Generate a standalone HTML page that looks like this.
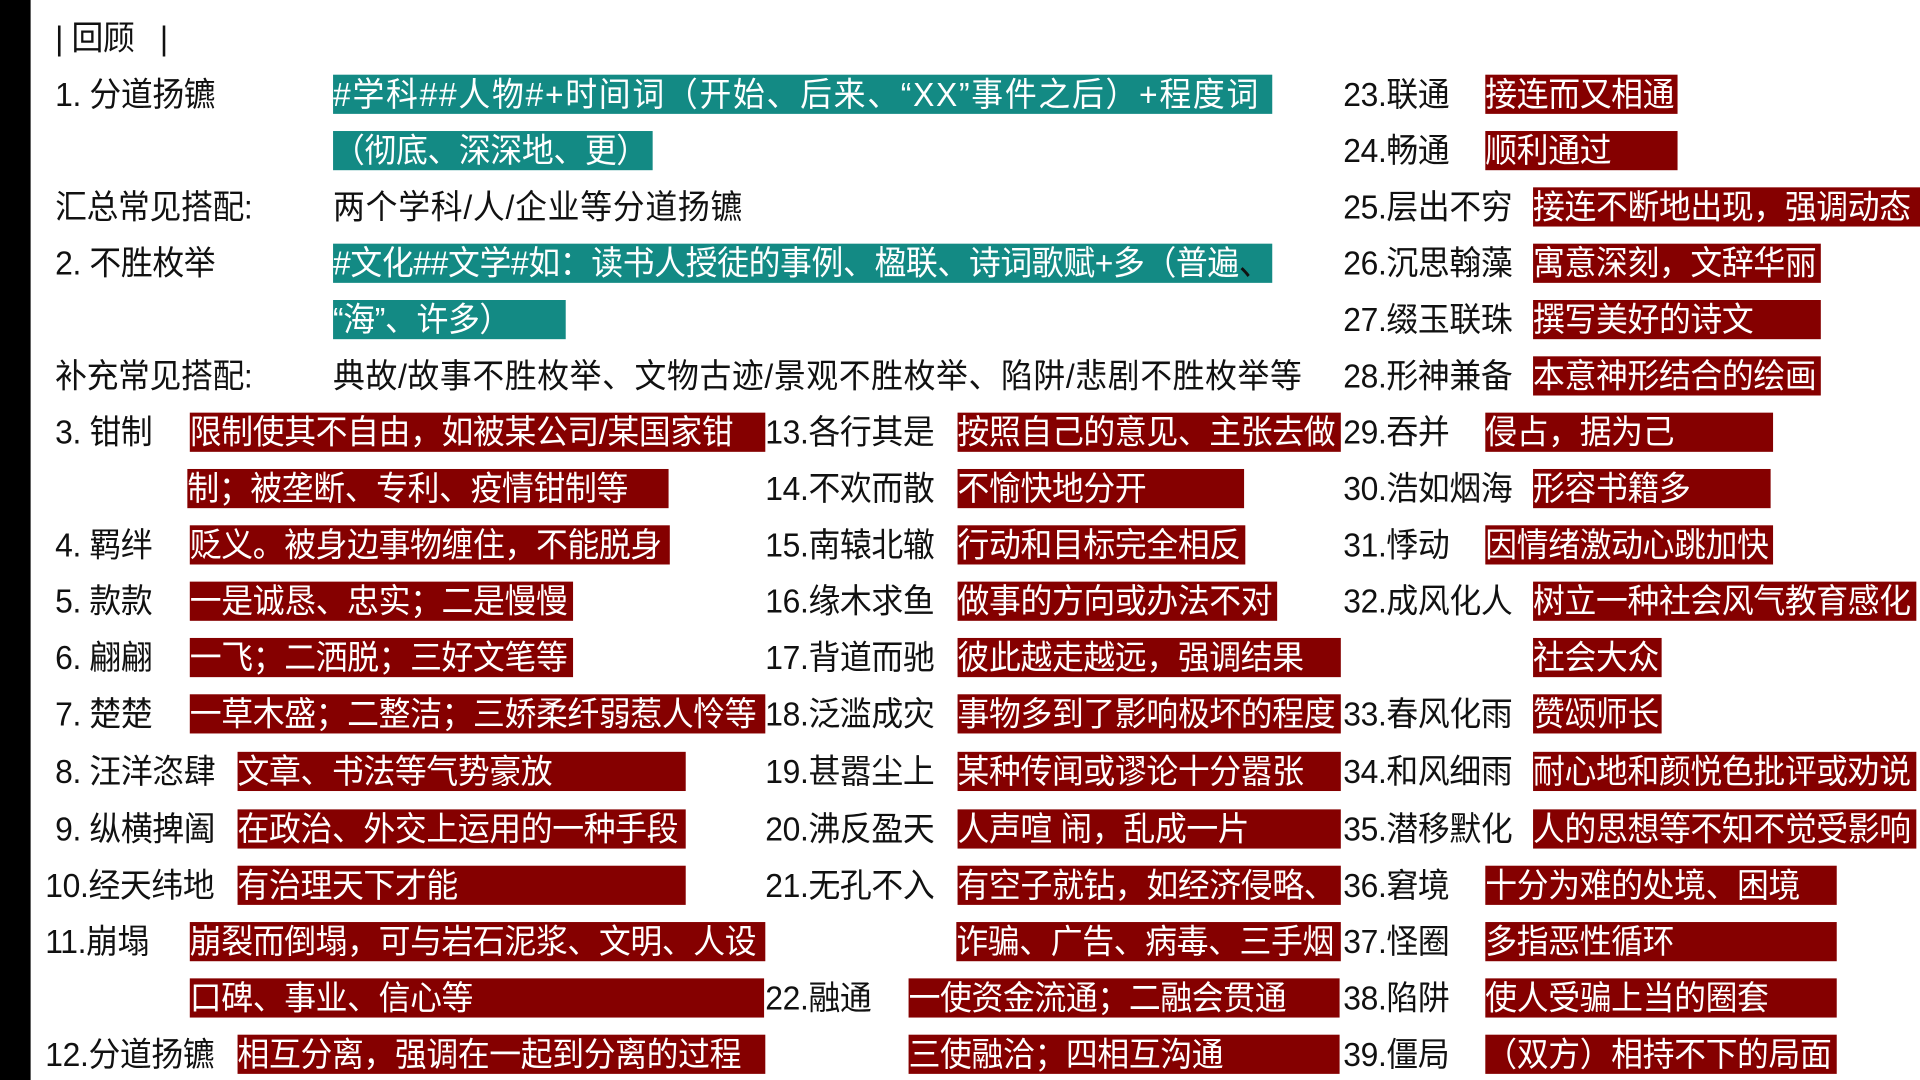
<!DOCTYPE html>
<html><head><meta charset="utf-8"><style>
html,body{margin:0;padding:0;width:1920px;height:1080px;overflow:hidden;background:#fff}
#w{position:absolute;left:0;top:0;width:1568px;height:882px;transform:scale(1.22449);transform-origin:0 0;font-family:"Liberation Sans","Noto Sans CJK SC",sans-serif}
#bar{position:absolute;left:0;top:0;width:25px;height:882px;background:#000}
.t,.b{position:absolute;height:32px;line-height:32px;white-space:nowrap;font-size:26px;color:#111;letter-spacing:-0.3px}
.t span,.b span{display:inline-block;transform:scaleY(1.05);transform-origin:50% 55%}
.b{background:#850000;color:#fff;overflow:hidden}
.g{background:#138a84;color:#fff;overflow:hidden}
</style></head><body><div id="w"><div id="bar"></div>
<div class="t" style="left:45px;top:15px"><span>| 回顾&nbsp;&nbsp;&nbsp;|</span></div>

<div class="t" style="left:45px;top:61px"><span>1. 分道扬镳</span></div>
<div class="b g" style="left:272px;top:61px;width:767px;letter-spacing:1.4px"><span>#学科##人物#+时间词（开始、后来、“XX”事件之后）+程度词</span></div>
<div class="b g" style="left:272px;top:107px;width:261px"><span>（彻底、深深地、更）</span></div>
<div class="t" style="left:45px;top:153px"><span>汇总常见搭配:</span></div>
<div class="t" style="left:272px;top:153px;letter-spacing:0.6px"><span>两个学科/人/企业等分道扬镳</span></div>
<div class="t" style="left:45px;top:199px"><span>2. 不胜枚举</span></div>
<div class="b g" style="left:272px;top:199px;width:767px;overflow:visible"><span>#文化##文学#如：读书人授徒的事例、楹联、诗词歌赋+多（普遍<span style="color:#111">、</span></span></div>
<div class="b g" style="left:272px;top:245px;width:190px"><span>“海”、许多）</span></div>
<div class="t" style="left:45px;top:291px"><span>补充常见搭配:</span></div>
<div class="t" style="left:272px;top:291px;letter-spacing:0.5px"><span>典故/故事不胜枚举、文物古迹/景观不胜枚举、陷阱/悲剧不胜枚举等</span></div>

<div class="t" style="left:45px;top:337px"><span>3. 钳制</span></div>
<div class="b" style="left:155px;top:337px;width:470px"><span>限制使其不自由，如被某公司/某国家钳</span></div>
<div class="b" style="left:153px;top:383px;width:393px"><span>制；被垄断、专利、疫情钳制等</span></div>
<div class="t" style="left:45px;top:429px"><span>4. 羁绊</span></div>
<div class="b" style="left:155px;top:429px;width:392px"><span>贬义。被身边事物缠住，不能脱身</span></div>
<div class="t" style="left:45px;top:475px"><span>5. 款款</span></div>
<div class="b" style="left:155px;top:475px;width:313px"><span>一是诚恳、忠实；二是慢慢</span></div>
<div class="t" style="left:45px;top:521px"><span>6. 翩翩</span></div>
<div class="b" style="left:155px;top:521px;width:313px"><span>一飞；二洒脱；三好文笔等</span></div>
<div class="t" style="left:45px;top:567px"><span>7. 楚楚</span></div>
<div class="b" style="left:155px;top:567px;width:470px"><span>一草木盛；二整洁；三娇柔纤弱惹人怜等</span></div>
<div class="t" style="left:45px;top:614px"><span>8. 汪洋恣肆</span></div>
<div class="b" style="left:194px;top:614px;width:366px"><span>文章、书法等气势豪放</span></div>
<div class="t" style="left:45px;top:661px"><span>9. 纵横捭阖</span></div>
<div class="b" style="left:194px;top:661px;width:366px"><span>在政治、外交上运用的一种手段</span></div>
<div class="t" style="left:37px;top:707px"><span>10.经天纬地</span></div>
<div class="b" style="left:194px;top:707px;width:366px"><span>有治理天下才能</span></div>
<div class="t" style="left:37px;top:753px"><span>11.崩塌</span></div>
<div class="b" style="left:155px;top:753px;width:470px"><span>崩裂而倒塌，可与岩石泥浆、文明、人设</span></div>
<div class="b" style="left:155px;top:799px;width:469px"><span>口碑、事业、信心等</span></div>
<div class="t" style="left:37px;top:845px"><span>12.分道扬镳</span></div>
<div class="b" style="left:194px;top:845px;width:431px"><span>相互分离，强调在一起到分离的过程</span></div>

<div class="t" style="left:625px;top:337px"><span>13.各行其是</span></div>
<div class="b" style="left:782px;top:337px;width:313px"><span>按照自己的意见、主张去做</span></div>
<div class="t" style="left:625px;top:383px"><span>14.不欢而散</span></div>
<div class="b" style="left:782px;top:383px;width:234px"><span>不愉快地分开</span></div>
<div class="t" style="left:625px;top:429px"><span>15.南辕北辙</span></div>
<div class="b" style="left:782px;top:429px;width:235px"><span>行动和目标完全相反</span></div>
<div class="t" style="left:625px;top:475px"><span>16.缘木求鱼</span></div>
<div class="b" style="left:782px;top:475px;width:261px"><span>做事的方向或办法不对</span></div>
<div class="t" style="left:625px;top:521px"><span>17.背道而驰</span></div>
<div class="b" style="left:782px;top:521px;width:313px"><span>彼此越走越远，强调结果</span></div>
<div class="t" style="left:625px;top:567px"><span>18.泛滥成灾</span></div>
<div class="b" style="left:782px;top:567px;width:313px"><span>事物多到了影响极坏的程度</span></div>
<div class="t" style="left:625px;top:614px"><span>19.甚嚣尘上</span></div>
<div class="b" style="left:782px;top:614px;width:313px"><span>某种传闻或谬论十分嚣张</span></div>
<div class="t" style="left:625px;top:661px"><span>20.沸反盈天</span></div>
<div class="b" style="left:782px;top:661px;width:313px"><span>人声喧 闹，乱成一片</span></div>
<div class="t" style="left:625px;top:707px"><span>21.无孔不入</span></div>
<div class="b" style="left:782px;top:707px;width:313px"><span>有空子就钻，如经济侵略、</span></div>
<div class="b" style="left:781px;top:753px;width:314px"><span>诈骗、广告、病毒、三手烟</span></div>
<div class="t" style="left:625px;top:799px"><span>22.融通</span></div>
<div class="b" style="left:742px;top:799px;width:352px"><span>一使资金流通；二融会贯通</span></div>
<div class="b" style="left:742px;top:845px;width:352px"><span>三使融洽；四相互沟通</span></div>

<div class="t" style="left:1097px;top:61px"><span>23.联通</span></div>
<div class="b" style="left:1213px;top:61px;width:157px"><span>接连而又相通</span></div>
<div class="t" style="left:1097px;top:107px"><span>24.畅通</span></div>
<div class="b" style="left:1213px;top:107px;width:157px"><span>顺利通过</span></div>
<div class="t" style="left:1097px;top:153px"><span>25.层出不穷</span></div>
<div class="b" style="left:1252px;top:153px;width:316px"><span>接连不断地出现，强调动态</span></div>
<div class="t" style="left:1097px;top:199px"><span>26.沉思翰藻</span></div>
<div class="b" style="left:1252px;top:199px;width:235px"><span>寓意深刻，文辞华丽</span></div>
<div class="t" style="left:1097px;top:245px"><span>27.缀玉联珠</span></div>
<div class="b" style="left:1252px;top:245px;width:235px"><span>撰写美好的诗文</span></div>
<div class="t" style="left:1097px;top:291px"><span>28.形神兼备</span></div>
<div class="b" style="left:1252px;top:291px;width:235px"><span>本意神形结合的绘画</span></div>
<div class="t" style="left:1097px;top:337px"><span>29.吞并</span></div>
<div class="b" style="left:1213px;top:337px;width:235px"><span>侵占，据为己</span></div>
<div class="t" style="left:1097px;top:383px"><span>30.浩如烟海</span></div>
<div class="b" style="left:1252px;top:383px;width:194px"><span>形容书籍多</span></div>
<div class="t" style="left:1097px;top:429px"><span>31.悸动</span></div>
<div class="b" style="left:1213px;top:429px;width:235px"><span>因情绪激动心跳加快</span></div>
<div class="t" style="left:1097px;top:475px"><span>32.成风化人</span></div>
<div class="b" style="left:1252px;top:475px;width:313px"><span>树立一种社会风气教育感化</span></div>
<div class="b" style="left:1252px;top:521px;width:105px"><span>社会大众</span></div>
<div class="t" style="left:1097px;top:567px"><span>33.春风化雨</span></div>
<div class="b" style="left:1252px;top:567px;width:105px"><span>赞颂师长</span></div>
<div class="t" style="left:1097px;top:614px"><span>34.和风细雨</span></div>
<div class="b" style="left:1252px;top:614px;width:313px"><span>耐心地和颜悦色批评或劝说</span></div>
<div class="t" style="left:1097px;top:661px"><span>35.潜移默化</span></div>
<div class="b" style="left:1252px;top:661px;width:313px"><span>人的思想等不知不觉受影响</span></div>
<div class="t" style="left:1097px;top:707px"><span>36.窘境</span></div>
<div class="b" style="left:1213px;top:707px;width:287px"><span>十分为难的处境、困境</span></div>
<div class="t" style="left:1097px;top:753px"><span>37.怪圈</span></div>
<div class="b" style="left:1213px;top:753px;width:287px"><span>多指恶性循环</span></div>
<div class="t" style="left:1097px;top:799px"><span>38.陷阱</span></div>
<div class="b" style="left:1213px;top:799px;width:287px"><span>使人受骗上当的圈套</span></div>
<div class="t" style="left:1097px;top:845px"><span>39.僵局</span></div>
<div class="b" style="left:1213px;top:845px;width:287px"><span>（双方）相持不下的局面</span></div>
</div></body></html>
